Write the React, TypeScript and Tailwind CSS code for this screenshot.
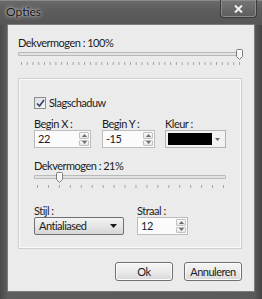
import React from "react";

function Thumb() {
  return (
    <svg width="7" height="11" viewBox="0 0 7 11" className="absolute top-0">
      <path d="M0.5 1.5 Q0.5 0.5 1.5 0.5 H5.5 Q6.5 0.5 6.5 1.5 V7.5 L3.5 10.5 L0.5 7.5 Z" fill="#f4f4f4" stroke="#7b7b7b" />
      <path d="M1.5 2 H5.5 V7" fill="none" stroke="#ffffff" />
    </svg>
  );
}

function Slider({ width, pos, ticks }: { width: number; pos: number; ticks: number }) {
  const step = (width - 6) / (ticks - 1);
  return (
    <div>
      <div className="relative h-[11px]">
        <div className="absolute left-0 right-0 top-[3px] h-[4px] rounded-[1px] border border-[#b9b9b9] bg-[#e2e2e2]" />
        <div className="absolute top-0" style={{ left: pos }}>
          <Thumb />
        </div>
      </div>
      <svg width={width} height="3" className="mt-[2px] block">
        {Array.from({ length: ticks }).map((_, i) => (
          <line key={i} x1={3.5 + i * step} x2={3.5 + i * step} y1="0" y2="3" stroke="#a4a4a4" />
        ))}
      </svg>
    </div>
  );
}

function Spinner() {
  return (
    <div className="ml-auto flex w-[11px] flex-col gap-px py-px pr-px">
      <div className="flex flex-1 items-center justify-center rounded-[1px] border border-[#c2c2c2] bg-[linear-gradient(#fafafa,#e4e4e4)]">
        <svg width="5" height="3" viewBox="0 0 5 3">
          <path d="M0 3 L2.5 0 L5 3 Z" fill="#6a6a6a" />
        </svg>
      </div>
      <div className="flex flex-1 items-center justify-center rounded-[1px] border border-[#c2c2c2] bg-[linear-gradient(#fafafa,#e4e4e4)]">
        <svg width="5" height="3" viewBox="0 0 5 3">
          <path d="M0 0 L2.5 3 L5 0 Z" fill="#6a6a6a" />
        </svg>
      </div>
    </div>
  );
}

function NumberBox({ value, width }: { value: string; width: string }) {
  return (
    <div className={`flex h-[18px] items-stretch border border-[#bcbcbc] bg-[#fbfbfb] ${width}`}>
      <span className="pl-[3px] leading-[16px]">{value}</span>
      <Spinner />
    </div>
  );
}

function Field({ label, children }: { label: string; children: React.ReactNode }) {
  return (
    <div className="flex flex-col">
      <div className="h-[13px] leading-[13px]">{label}</div>
      {children}
    </div>
  );
}

export default function App() {
  return (
    <div className="flex h-[299px] w-[262px] flex-col overflow-hidden bg-[linear-gradient(to_right,#4a4a4a,#5e5e5e_3%,#5a5a5a_97%,#444)] font-['Lato',sans-serif] text-[11px] tracking-[-0.5px] text-[#1c1c1c]">
      {/* title bar */}
      <div className="flex h-[25px] items-start border-t border-[#8a8a8a] bg-[linear-gradient(#6a6a6a,#5c5c5c_40%,#565656)] pr-[5px]">
        <span className="ml-[6px] mt-[4px] text-[12px] leading-[14px] tracking-normal text-[#151515] [text-shadow:0_0_5px_rgba(255,255,255,0.8),0_0_2px_rgba(255,255,255,0.6)]">
          Opties
        </span>
        <div className="ml-auto -mt-px flex h-[18px] w-[37px] items-center justify-center rounded-b-[4px] border border-t-0 border-[#3c3c3c] bg-[linear-gradient(#767676,#5d5d5d)] shadow-[inset_0_0_0_1px_#8c8c8c]">
          <svg width="9" height="8" viewBox="0 0 9 8">
            <path d="M1 0.5 L8 7.5 M8 0.5 L1 7.5" stroke="#f2f2f2" strokeWidth="2" />
          </svg>
        </div>
      </div>

      {/* client area */}
      <div className="mx-[8px] h-[266px] bg-[#ebebeb] pl-[10px] pr-[12px] pt-[11px] shadow-[0_0_0_1px_#7c7c7c]">
        <div className="h-[13px] leading-[13px]">Dekvermogen : 100%</div>
        <Slider width={224} pos={218} ticks={39} />

        <div className="mt-[13px] h-[171px] border border-[#cfcfcf] pl-[15px] pt-[17px] shadow-[inset_0_0_0_1px_#fbfbfb]">
          <div className="flex h-[13px] items-center gap-[3px]">
            <div className="flex h-[12px] w-[12px] items-center justify-center border border-[#8e8f8f] bg-[linear-gradient(135deg,#dcdcdc,#f6f6f6)]">
              <svg width="9" height="8" viewBox="0 0 9 8">
                <path d="M1 4.5 L3.5 7 L8 1" fill="none" stroke="#2f3f72" strokeWidth="1.6" />
              </svg>
            </div>
            <span className="leading-[13px]">Slagschaduw</span>
          </div>

          <div className="mt-[8px] flex gap-[11px]">
            <Field label="Begin X :">
              <NumberBox value="22" width="w-[57px]" />
            </Field>
            <Field label="Begin Y :">
              <NumberBox value="-15" width="w-[53px]" />
            </Field>
            <div className="-ml-px">
              <Field label="Kleur :">
                <div className="flex h-[18px] w-[61px] border border-[#b3b3b3] bg-[#f2f2f2] p-[2px]">
                  <div className="w-[44px] bg-black" />
                  <div className="flex flex-1 items-center justify-center">
                    <svg width="5" height="3" viewBox="0 0 5 3">
                      <path d="M0 0 L2.5 3 L5 0 Z" fill="#6a6a6a" />
                    </svg>
                  </div>
                </div>
              </Field>
            </div>
          </div>

          <div className="mt-[11px] h-[13px] leading-[13px]">Dekvermogen : 21%</div>
          <div className="w-[192px]">
            <Slider width={192} pos={22} ticks={18} />
          </div>

          <div className="mt-[17px] flex gap-[13px]">
            <div className="flex flex-col">
              <div className="h-[12px] leading-[12px]">Stijl :</div>
              <div className="flex h-[18px] w-[90px] items-center rounded-[2px] border border-[#707070] bg-[linear-gradient(#f3f3f3,#e6e6e6_50%,#d6d6d6)] pl-[4px] pr-[6px]">
                <span>Antialiased</span>
                <svg width="7" height="4" viewBox="0 0 7 4" className="ml-auto">
                  <path d="M0 0 L3.5 4 L7 0 Z" fill="#1a1a1a" />
                </svg>
              </div>
            </div>
            <div className="flex flex-col">
              <div className="h-[12px] leading-[12px]">Straal :</div>
              <NumberBox value="12" width="w-[51px]" />
            </div>
          </div>
        </div>

        <div className="mt-[13px] flex justify-end gap-[11px]">
          <button className="h-[19px] w-[58px] rounded-[3px] border border-[#707070] bg-[linear-gradient(#f4f4f4,#ebebeb_50%,#d8d8d8)] leading-[17px] shadow-[inset_0_0_0_1px_#fcfcfc]">
            Ok
          </button>
          <button className="h-[19px] w-[58px] rounded-[3px] border border-[#707070] bg-[linear-gradient(#f4f4f4,#ebebeb_50%,#d8d8d8)] leading-[17px] shadow-[inset_0_0_0_1px_#fcfcfc]">
            Annuleren
          </button>
        </div>
      </div>
    </div>
  );
}
